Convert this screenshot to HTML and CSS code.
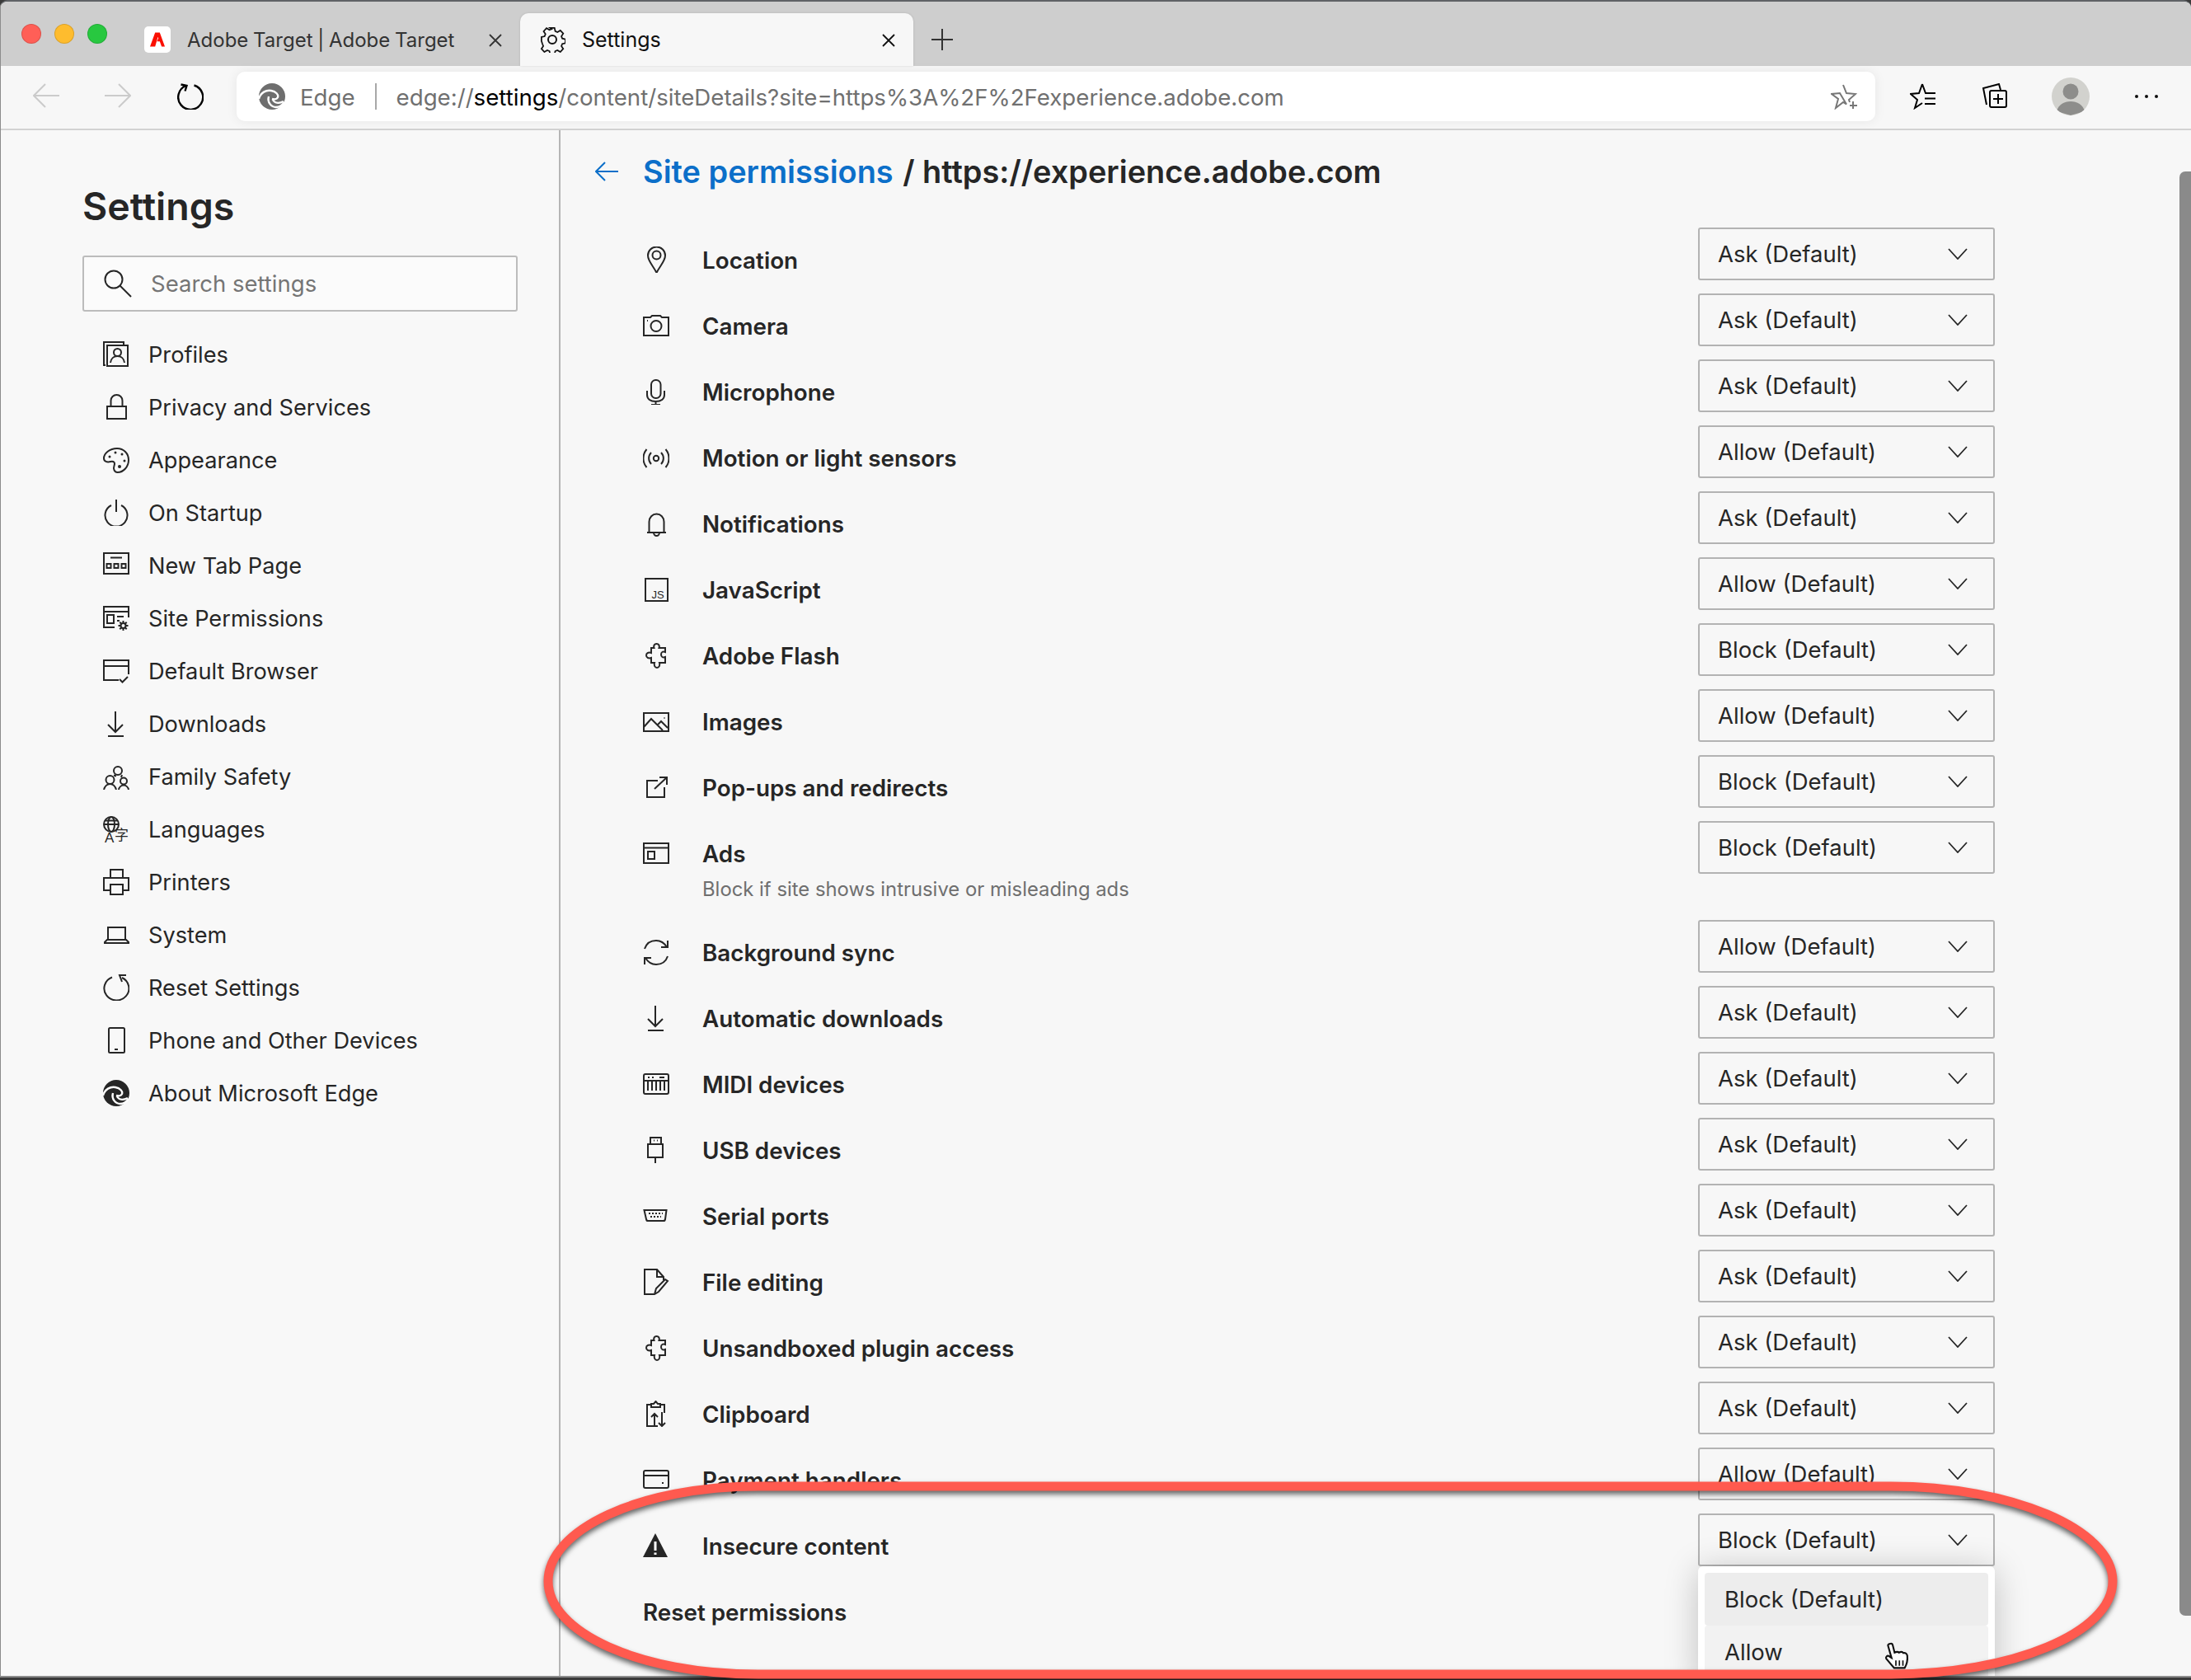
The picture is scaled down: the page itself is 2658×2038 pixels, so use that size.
FILE: index.html
```html
<!DOCTYPE html>
<html lang="en">
<head>
<meta charset="utf-8">
<title>Settings</title>
<link rel="stylesheet" href="styles.css">
</head>
<body>
<svg class="defs" width="0" height="0" aria-hidden="true">
  <symbol id="edge" viewBox="0 0 32 32">
    <circle class="solid" cx="16" cy="16" r="16"/>
    <path class="cut" d="M0 19C2 11 9 8 15 9c6 1 9 5 8 8-1 2-4 3-7 2"/>
    <path class="cut" d="M12 16c-2 7 3 13 9 13 4 0 7-2 10-6"/>
    <path class="cut" d="M17 20c2 4 7 5 13 2"/>
  </symbol>
  <symbol id="puzzle" viewBox="0 0 32 32"><path d="M10 7h3.500c-1-3 .5-5 3-5s4 2 3 5H27v5c-3-1-5 0-5 3s2 4 5 3v7h-7c1 3-.5 6-3 6s-4-3-3-6h-4v-6c-3 1-6 0-6-3s3-4 6-3z"/></symbol>
  <symbol id="download" viewBox="0 0 32 32"><path d="M15 1v25M6 17l9 9 9-9M6 31h19"/></symbol>
  <symbol id="profiles" viewBox="0 0 32 32"><path d="M3 29H1V1h24v3"/><rect x="5" y="5" width="25" height="25"/><circle cx="17.500" cy="13.500" r="4.500"/><path d="M9 26c.5-5 4-8 8.500-8s8 3 8.500 8"/></symbol>
  <symbol id="lock" viewBox="0 0 32 32"><rect x="5" y="15" width="23" height="15"/><path d="M9.500 15V8a7 7 0 0 1 14 0v7"/></symbol>
  <symbol id="palette" viewBox="0 0 32 32"><path d="M17 2C8 2 1 8 1 14c0 4 4 5 8 4 4-1 6 1 4.500 5-1.500 4 .5 8 4 8C25 31 31 24 31 16 31 8 25 2 17 2z"/><circle class="solid" cx="8" cy="12" r="1.500"/><circle class="solid" cx="15" cy="7" r="1.500"/><circle class="solid" cx="23" cy="9" r="1.500"/><circle class="solid" cx="26" cy="17" r="1.500"/><circle class="solid" cx="20" cy="24" r="2"/></symbol>
  <symbol id="power" viewBox="0 0 32 32"><path d="M16 0v15M10 7a13.500 13.500 0 1 0 12 0"/></symbol>
  <symbol id="newtab" viewBox="0 0 32 32"><rect x="1" y="1" width="30" height="25"/><path d="M9 6.500h14"/><rect x="4.500" y="14" width="5" height="5"/><rect x="13.500" y="14" width="5" height="5"/><rect x="22.500" y="14" width="5" height="5"/></symbol>
  <symbol id="siteperm" viewBox="0 0 32 32"><path d="M14 27H1V2h30v13M1 8h30"/><rect x="5" y="12" width="8" height="10"/><path d="M17 14h8M17 19h3"/><circle cx="24.500" cy="25" r="3"/><path d="M24.500 19v3M24.500 28v3M18.500 25h3M27.500 25h3M20.300 20.800l2 2M26.700 27.200l2 2M28.700 20.800l-2 2M22.300 27.200l-2 2"/></symbol>
  <symbol id="browser" viewBox="0 0 32 32"><path d="M19 27H1V3h30v17M1 10h30M20 26l3.500 3.500L30 23"/></symbol>
  <symbol id="family" viewBox="0 0 32 32"><circle cx="18" cy="9" r="5"/><circle cx="8.500" cy="20" r="5"/><circle cx="25" cy="21.500" r="4"/><path d="M1 32c1-4 4-7 7.500-7s6.500 3 7.500 7M19 32c.5-3 3-5.500 6-5.500s5.500 2.500 6 5.500M13 14.500l3 1M23 14l-1 3"/></symbol>
  <symbol id="printer" viewBox="0 0 32 32"><path d="M9 11V1h15v10M9 26H1V11h30v15h-7"/><rect x="9" y="19" width="15" height="12"/></symbol>
  <symbol id="laptop" viewBox="0 0 32 32"><path d="M6 22V7h21v15M5 22h23l3 3v1H2v-1z"/></symbol>
  <symbol id="reset" viewBox="0 0 32 32"><path d="M11 3.500a15 14.500 0 1 0 12 .5M28 1h-8l3 8"/></symbol>
  <symbol id="phone" viewBox="0 0 32 32"><rect x="7" y="1" width="19" height="30" rx="1.500"/><path d="M14 27h4"/></symbol>
  <symbol id="pin" viewBox="0 0 32 32"><path d="M16.500 32C13 24 6 18 6 11a10.500 10.500 0 0 1 21 0c0 7-7 13-10.500 21z"/><circle cx="16.500" cy="10.500" r="5"/></symbol>
  <symbol id="camera" viewBox="0 0 32 32"><path d="M1 6h8l2-2h10l2 2h8v22H1z"/><circle cx="16" cy="16.500" r="6.500"/><path d="M5 10h1"/></symbol>
  <symbol id="mic" viewBox="0 0 32 32"><rect x="10" y="2" width="11.500" height="22" rx="5.500"/><path d="M5 15v5c0 5 4 8 10.500 8s10.500-3 10.500-8v-5M15.500 28v3M10 32h11"/></symbol>
  <symbol id="sensor" viewBox="0 0 32 32"><circle cx="16" cy="17" r="3.200"/><path d="M10 10a10 10 0 0 0 0 14M22 10a10 10 0 0 1 0 14M4.500 6a17 17 0 0 0 0 22M27.500 6a17 17 0 0 1 0 22"/></symbol>
  <symbol id="bell" viewBox="0 0 32 32"><path d="M5 27h23M7.500 27V14a9 9.500 0 0 1 18 0v13M13 27c0 2 1.500 4 3.500 4s3.500-2 3.500-4"/></symbol>
  <symbol id="image" viewBox="0 0 32 32"><rect x="1" y="6" width="30" height="22"/><path d="M1 23l9-10 14 14M18 20l4-4 8 8M26 11.500v1"/></symbol>
  <symbol id="popup" viewBox="0 0 32 32"><path d="M18 8H5v20h21V16M14 18L29 4M20 4h9v9"/></symbol>
  <symbol id="ads" viewBox="0 0 32 32"><rect x="1" y="4" width="30" height="24"/><path d="M1 9.500h30"/><rect x="6" y="14" width="8" height="9"/></symbol>
  <symbol id="sync" viewBox="0 0 32 32"><path d="M2 12C4 6 9 2 16 2c6 0 10 3 13 8M30 2v8h-8M30 21c-2 6-7 10-14 10-6 0-10-3-13-8M2 31v-8h8"/></symbol>
  <symbol id="midi" viewBox="0 0 32 32"><rect x="1" y="4" width="30" height="24" rx="2"/><path d="M1 12h30M6 12v12M11 12v12M16 12v12M21 12v12M26 12v12M6 8h2M11 8h2M20 8h6"/></symbol>
  <symbol id="usb" viewBox="0 0 32 32"><path d="M9 9V1h13v8M6 9h18v16H6zM15 25v7M13 4.500h1M17 4.500h1"/></symbol>
  <symbol id="serial" viewBox="0 0 32 32"><path d="M1.500 9h27L27 20q-.3 2-2 2H6q-1.700 0-2-2z"/><path class="dash" d="M7 13h17M9 17h13"/></symbol>
  <symbol id="file" viewBox="0 0 32 32"><path d="M13 31H2V1h15l8 9v4M17 1v9h8M14 31l2-7 11-11 3 2-11 13z"/></symbol>
  <symbol id="clipboard" viewBox="0 0 32 32"><path d="M9 5H5v26h13M22 5h4v10M10 8V4h3l2.500-3L18 4h3v4zM14 31V16M10 20l4-4 4 4M23 14v17M19 27l4 4 4-4"/></symbol>
  <symbol id="payment" viewBox="0 0 32 32"><rect x="1" y="5" width="30" height="21" rx="2"/><path d="M1 11h30M23 20h2"/></symbol>
  <symbol id="warning" viewBox="0 0 32 32"><path class="solid" d="M15 1l15 29H0z"/><path class="cut thin" d="M15 11v11M15 24.500v2.500"/></symbol>
</svg>

<div class="window">
  <header class="tabstrip">
    <div class="lights"><span class="light red"></span><span class="light amber"></span><span class="light green"></span></div>
    <div class="tab">
      <span class="favicon"><svg viewBox="0 0 32 32" width="20" height="18"><path class="adobe" d="M11 1h10l11 30h-7l-4-11h-6l3-7 2 5-3-8-6 21H0z"/></svg></span>
      <span class="tab-title tight">Adobe Target | Adobe Target</span>
      <svg class="close" viewBox="0 0 16 16"><path d="M1 1l14 14M15 1L1 15"/></svg>
    </div>
    <div class="tab active">
      <svg class="gear" viewBox="0 0 32 32"><path d="M13 1h6l1 4.500 3 1.300 4-2.400 4 4.300-2.500 3.800 1.200 3 4.300 1v5.500l-4.300 1-1.200 3 2.500 3.800-4 4.300-4-2.400-3 1.300-1 4.500h-6l-1-4.500-3-1.300-4 2.400-4-4.300 2.500-3.800-1.200-3L1 19v-5.500l4.300-1 1.200-3L4 5.700 8 1.400l4 2.400 3-1.300z" transform="translate(2 1) scale(.88)"/><circle cx="16" cy="16" r="5"/></svg>
      <span class="tab-title">Settings</span>
      <svg class="close" viewBox="0 0 16 16"><path d="M1 1l14 14M15 1L1 15"/></svg>
    </div>
    <svg class="plus" viewBox="0 0 26 26"><path d="M13 0v26M0 13h26"/></svg>
  </header>

  <nav class="toolbar">
    <svg class="tool muted back" viewBox="0 0 32 32"><path d="M32 15H1M15 1L1 15l14 14"/></svg>
    <svg class="tool muted forward" viewBox="0 0 32 32"><path d="M0 15h31M17 1l14 14-14 14"/></svg>
    <svg class="tool reload" viewBox="0 0 32 32"><path d="M10 2.500a15 15 0 1 0 10-.5M4 1l7 1.500-2 6.500" transform="translate(.5 .5)"/></svg>
    <div class="address">
      <svg class="ico edge-gray"><use href="#edge"/></svg>
      <span class="edge-label">Edge</span>
      <span class="addr-sep"></span>
      <span class="url">edge://<b>settings</b>/content/siteDetails?site=https%3A%2F%2Fexperience.adobe.com</span>
      <svg class="tool star" viewBox="0 0 32 32"><path d="M15 2l4 10 11 1-8 7 1 3M19 25.500L15 23l-9 7 3-11-8-6 10-1z"/><path d="M27 22v9M23 27h9"/></svg>
    </div>
    <svg class="tool favs" viewBox="0 0 32 32"><path d="M15 1l-4 11-10 1 8 7-3 10 9-6M15 1l4 11h12M18 18.500h13M18 25h13"/></svg>
    <svg class="tool colls" viewBox="0 0 32 32"><path d="M5 26L1 6 20 1l2 7"/><rect x="9" y="9" width="20" height="20" rx="2"/><path d="M19 13v12M13 19h12"/></svg>
    <span class="avatar"><svg viewBox="0 0 46 46"><circle class="fig" cx="23" cy="17" r="9.500"/><path class="fig" d="M6 41c2-8 9-12 17-12s15 4 17 12l-17 5z"/></svg></span>
    <span class="dots"><i></i><i></i><i></i></span>
  </nav>

  <div class="main">
    <aside class="sidebar">
      <h1 class="side-title">Settings</h1>
      <div class="search">
        <svg class="ico" viewBox="0 0 32 32"><circle cx="11" cy="11" r="10.500"/><path d="M18.500 18.500L32 32"/></svg>
        <span class="search-text">Search settings</span>
      </div>
      <ul class="side-nav">
        <li><svg class="ico"><use href="#profiles"/></svg>Profiles</li>
        <li><svg class="ico"><use href="#lock"/></svg>Privacy and Services</li>
        <li><svg class="ico"><use href="#palette"/></svg>Appearance</li>
        <li><svg class="ico"><use href="#power"/></svg>On Startup</li>
        <li><svg class="ico"><use href="#newtab"/></svg>New Tab Page</li>
        <li><svg class="ico"><use href="#siteperm"/></svg>Site Permissions</li>
        <li><svg class="ico"><use href="#browser"/></svg>Default Browser</li>
        <li><svg class="ico"><use href="#download"/></svg>Downloads</li>
        <li><svg class="ico"><use href="#family"/></svg>Family Safety</li>
        <li><svg class="ico" viewBox="0 0 32 32"><circle cx="10" cy="10" r="9"/><ellipse cx="10" cy="10" rx="4" ry="9"/><path d="M1 10h18M2.500 5.500h15"/><text class="glyph" x="2" y="32" font-size="17">A</text><text class="glyph cjk" x="14" y="29" font-size="17">字</text></svg>Languages</li>
        <li><svg class="ico"><use href="#printer"/></svg>Printers</li>
        <li><svg class="ico"><use href="#laptop"/></svg>System</li>
        <li><svg class="ico"><use href="#reset"/></svg>Reset Settings</li>
        <li><svg class="ico"><use href="#phone"/></svg>Phone and Other Devices</li>
        <li><svg class="ico about"><use href="#edge"/></svg>About Microsoft Edge</li>
      </ul>
    </aside>

    <section class="content">
      <div class="crumbs">
        <svg class="crumb-back" viewBox="0 0 28 24"><path d="M28 12H1M12 1L1 12l11 11"/></svg>
        <h2 class="crumb-title"><a class="crumb-link">Site permissions</a> / https://experience.adobe.com</h2>
      </div>

      <div class="row"><svg class="ico"><use href="#pin"/></svg><div class="text"><div class="label">Location</div></div><div class="select">Ask (Default)<svg class="chev" viewBox="0 0 24 14"><path d="M1 1l11 12L23 1"/></svg></div></div>
      <div class="row"><svg class="ico"><use href="#camera"/></svg><div class="text"><div class="label">Camera</div></div><div class="select">Ask (Default)<svg class="chev" viewBox="0 0 24 14"><path d="M1 1l11 12L23 1"/></svg></div></div>
      <div class="row"><svg class="ico"><use href="#mic"/></svg><div class="text"><div class="label">Microphone</div></div><div class="select">Ask (Default)<svg class="chev" viewBox="0 0 24 14"><path d="M1 1l11 12L23 1"/></svg></div></div>
      <div class="row"><svg class="ico"><use href="#sensor"/></svg><div class="text"><div class="label">Motion or light sensors</div></div><div class="select">Allow (Default)<svg class="chev" viewBox="0 0 24 14"><path d="M1 1l11 12L23 1"/></svg></div></div>
      <div class="row"><svg class="ico"><use href="#bell"/></svg><div class="text"><div class="label">Notifications</div></div><div class="select">Ask (Default)<svg class="chev" viewBox="0 0 24 14"><path d="M1 1l11 12L23 1"/></svg></div></div>
      <div class="row"><svg class="ico" viewBox="0 0 32 32"><rect x="3" y="3" width="27" height="27"/><text class="glyph" x="10.500" y="26.500" font-size="13">JS</text></svg><div class="text"><div class="label">JavaScript</div></div><div class="select">Allow (Default)<svg class="chev" viewBox="0 0 24 14"><path d="M1 1l11 12L23 1"/></svg></div></div>
      <div class="row"><svg class="ico"><use href="#puzzle"/></svg><div class="text"><div class="label">Adobe Flash</div></div><div class="select">Block (Default)<svg class="chev" viewBox="0 0 24 14"><path d="M1 1l11 12L23 1"/></svg></div></div>
      <div class="row"><svg class="ico"><use href="#image"/></svg><div class="text"><div class="label">Images</div></div><div class="select">Allow (Default)<svg class="chev" viewBox="0 0 24 14"><path d="M1 1l11 12L23 1"/></svg></div></div>
      <div class="row"><svg class="ico"><use href="#popup"/></svg><div class="text"><div class="label">Pop-ups and redirects</div></div><div class="select">Block (Default)<svg class="chev" viewBox="0 0 24 14"><path d="M1 1l11 12L23 1"/></svg></div></div>
      <div class="row row-tall"><svg class="ico"><use href="#ads"/></svg><div class="text"><div class="label">Ads</div><div class="sub">Block if site shows intrusive or misleading ads</div></div><div class="select">Block (Default)<svg class="chev" viewBox="0 0 24 14"><path d="M1 1l11 12L23 1"/></svg></div></div>
      <div class="row"><svg class="ico"><use href="#sync"/></svg><div class="text"><div class="label">Background sync</div></div><div class="select">Allow (Default)<svg class="chev" viewBox="0 0 24 14"><path d="M1 1l11 12L23 1"/></svg></div></div>
      <div class="row"><svg class="ico"><use href="#download"/></svg><div class="text"><div class="label">Automatic downloads</div></div><div class="select">Ask (Default)<svg class="chev" viewBox="0 0 24 14"><path d="M1 1l11 12L23 1"/></svg></div></div>
      <div class="row"><svg class="ico"><use href="#midi"/></svg><div class="text"><div class="label">MIDI devices</div></div><div class="select">Ask (Default)<svg class="chev" viewBox="0 0 24 14"><path d="M1 1l11 12L23 1"/></svg></div></div>
      <div class="row"><svg class="ico"><use href="#usb"/></svg><div class="text"><div class="label">USB devices</div></div><div class="select">Ask (Default)<svg class="chev" viewBox="0 0 24 14"><path d="M1 1l11 12L23 1"/></svg></div></div>
      <div class="row"><svg class="ico"><use href="#serial"/></svg><div class="text"><div class="label">Serial ports</div></div><div class="select">Ask (Default)<svg class="chev" viewBox="0 0 24 14"><path d="M1 1l11 12L23 1"/></svg></div></div>
      <div class="row"><svg class="ico"><use href="#file"/></svg><div class="text"><div class="label">File editing</div></div><div class="select">Ask (Default)<svg class="chev" viewBox="0 0 24 14"><path d="M1 1l11 12L23 1"/></svg></div></div>
      <div class="row"><svg class="ico"><use href="#puzzle"/></svg><div class="text"><div class="label">Unsandboxed plugin access</div></div><div class="select">Ask (Default)<svg class="chev" viewBox="0 0 24 14"><path d="M1 1l11 12L23 1"/></svg></div></div>
      <div class="row"><svg class="ico"><use href="#clipboard"/></svg><div class="text"><div class="label">Clipboard</div></div><div class="select">Ask (Default)<svg class="chev" viewBox="0 0 24 14"><path d="M1 1l11 12L23 1"/></svg></div></div>
      <div class="row"><svg class="ico"><use href="#payment"/></svg><div class="text"><div class="label">Payment handlers</div></div><div class="select">Allow (Default)<svg class="chev" viewBox="0 0 24 14"><path d="M1 1l11 12L23 1"/></svg></div></div>
      <div class="row"><svg class="ico"><use href="#warning"/></svg><div class="text"><div class="label">Insecure content</div></div>
        <div class="select">Block (Default)<svg class="chev" viewBox="0 0 24 14"><path d="M1 1l11 12L23 1"/></svg>
          <div class="menu">
            <div class="option current">Block (Default)</div>
            <div class="option hover">Allow
              <svg class="hand" viewBox="0 0 30 32"><path d="M8 2c2-1 3 0 3.500 2l2 8c2-1 4-1 5 0 2-1 4-1 5 .5 2-.5 4 .5 4.500 3 .5 5-.5 10-3 14H13L4 19c-1-2 1-4 3-3l3 2-4-14c-.3-1 .5-1.700 2-2z"/><path class="hand-line" d="M15 21v6M19 21v6M23 21v6"/></svg>
            </div>
          </div>
        </div>
      </div>
      <div class="row row-plain"><div class="text"><div class="label">Reset permissions</div></div></div>

      <div class="scrollbar"></div>
    </section>
  </div>
</div>

<svg class="callout" viewBox="0 0 2658 2038" aria-hidden="true">
  <path d="M920 1803H2294C2440 1803 2563 1855 2563 1918S2440 2031 2294 2031H920C775 2031 665 1980 665 1918S775 1803 920 1803Z"/>
</svg>
</body>
</html>
```

FILE: styles.css
```css
* { box-sizing: border-box; }
html, body { margin: 0; height: 2038px; overflow: hidden; }
body { position: relative; background: #3a3a3a; font-family: Inter, "Noto Sans", sans-serif; color: #262626; }
.defs { position: absolute; }
.solid { fill: currentColor; stroke: none; }
.cut { fill: none; stroke: #fff; stroke-width: 2.400; }
.cut.thin { stroke-width: 3; }
.glyph { fill: currentColor; stroke: none; font-family: "Liberation Sans", sans-serif; }
.cjk { font-family: "Noto Sans CJK SC", sans-serif; }
.dash { stroke-dasharray: 2 2; }

.window { height: 2035px; display: flex; flex-direction: column; overflow: hidden; background: #f7f7f7; border-top: 2px solid #5f6266; border-bottom: 2px solid #8c8c8c; border-left: 1px solid #8c8c8c; border-radius: 9px 9px 0 0; }

.tabstrip { flex: none; height: 78px; display: flex; align-items: flex-end; background: #cecece; }
.lights { align-self: flex-start; display: flex; gap: 16px; margin: 27px 0 0 25px; }
.light { width: 24px; height: 24px; border-radius: 50%; border: 1px solid rgba(0,0,0,.14); }
.red { background: #ff5f57; }
.amber { background: #febc2e; }
.green { background: #28c840; }
.tab { width: 477px; height: 64px; display: flex; align-items: center; position: relative; color: #333; font-size: 25px; border-radius: 10px 10px 0 0; }
.lights + .tab { margin-left: 45px; width: 456px; }
.favicon { flex: none; width: 32px; height: 32px; background: #fff; border-radius: 5px; display: flex; align-items: center; justify-content: center; }
.adobe { fill: #fa0f00; stroke: none; }
.tab-title { margin-left: 20px; white-space: nowrap; }
.tight { font-size: 24px; word-spacing: -1px; }
.close { width: 16px; height: 16px; position: absolute; right: 22px; top: 25px; fill: none; stroke: currentColor; stroke-width: 1.800; }
.tab.active { background: #f7f7f7; color: #111; padding-left: 23px; box-shadow: 0 0 3px rgba(0,0,0,.12); }
.gear { width: 32px; height: 32px; flex: none; fill: none; stroke: #111; stroke-width: 2; }
.plus { flex: none; width: 26px; height: 26px; margin: 0 0 19px 22px; stroke: #333; stroke-width: 2; fill: none; }

.toolbar { flex: none; height: 78px; display: flex; align-items: center; padding: 0 0 2px 39px; background: #f7f7f7; border-bottom: 2px solid #d2d2d2; }
.tool { flex: none; width: 32px; height: 32px; fill: none; stroke: #000; stroke-width: 2; }
.tool.muted { stroke: #cbcbcb; }
.forward { margin-left: 55px; }
.reload { margin-left: 56px; stroke-width: 2.400; }
.address { flex: none; width: 1988px; height: 60px; margin-left: 40px; display: flex; align-items: center; padding: 0 22px 0 27px; background: #fff; border-radius: 10px; box-shadow: 0 0 14px rgba(0,0,0,.07); color: #707070; font-size: 27.650px; white-space: nowrap; }
.edge-gray { color: #6e6e6e; }
.edge-gray, .about { stroke: none; }
.edge-label { margin-left: 18px; padding-top: 2px; }
.addr-sep { width: 2px; height: 32px; background: #a8a8a8; margin: 0 24px 0 24px; }
.url { padding-top: 2px; }
.url b { font-weight: 400; color: #000; }
.star { margin-left: auto; stroke: #777; }
.favs { margin-left: 42px; }
.colls { margin-left: 56px; }
.avatar { flex: none; width: 46px; height: 46px; margin-left: 52px; border-radius: 50%; background: #d2d2ce; overflow: hidden; }
.avatar svg { display: block; }
.fig { fill: #8d8d8b; }
.dots { flex: none; display: flex; gap: 8px; margin-left: 55px; }
.dots i { width: 4px; height: 4px; background: #111; border-radius: 50%; }

.main { flex: 1; display: flex; min-height: 0; }
.sidebar { flex: none; width: 679px; padding: 62px 50px 0 99px; border-right: 2px solid #b5b5b5; background: #f8f8f8; }
.side-title { margin: 0; height: 60px; line-height: 60px; font-size: 46.500px; font-weight: 600; color: #262626; }
.search { height: 68px; margin-top: 30px; display: flex; align-items: center; gap: 24px; padding-left: 25px; background: #fbfbfb; border: 2px solid #bcbcbc; border-radius: 3px; }
.search-text { font-size: 27.500px; color: #757575; }
.ico { flex: none; width: 32px; height: 32px; fill: none; stroke: currentColor; stroke-width: 2; overflow: visible; }
.side-nav { list-style: none; margin: 20px 0 0; padding: 0 0 0 25px; }
.side-nav li { height: 64px; display: flex; align-items: center; gap: 23px; font-size: 27.200px; white-space: nowrap; }

.content { flex: 1; position: relative; padding: 26px 238px 0 0; overflow: hidden; }
.crumbs { display: flex; align-items: center; gap: 30px; height: 48px; margin: 0 0 44px 42px; }
.crumb-back { width: 28px; height: 24px; flex: none; fill: none; stroke: #0c6fc9; stroke-width: 2; }
.crumb-title { margin: 0; font-size: 37.900px; line-height: 48px; font-weight: 600; white-space: nowrap; }
.crumb-link { color: #0c6fc9; margin-right: 2px; }

.row { height: 80px; display: flex; align-items: flex-start; padding-left: 100px; }
.row-tall { height: 120px; }
.row > .ico { margin: 23px 40px 0 0; }
.text { flex: 1; }
.label { margin-top: 20px; font-size: 27.800px; line-height: 40px; font-weight: 600; white-space: nowrap; }
.sub { font-size: 23.850px; line-height: 36px; margin-top: 5px; color: #6f6f6f; white-space: nowrap; }
.select { flex: none; width: 360px; height: 64px; position: relative; display: flex; align-items: center; justify-content: space-between; padding: 0 31px 0 22px; border: 2px solid #b3b3b3; border-radius: 3px; font-size: 27.500px; white-space: nowrap; }
.chev { width: 24px; height: 14px; fill: none; stroke: #262626; stroke-width: 1.800; }
.menu { position: absolute; left: -2px; right: -2px; top: 62px; padding: 8px; background: #fff; border-radius: 6px; box-shadow: 0 4px 40px rgba(0,0,0,.22); }
.option { height: 64px; display: flex; align-items: center; padding-left: 24px; border-radius: 4px; position: relative; }
.option.current { background: #ededed; }
.option.hover { background: #f2f2f2; }
.hand { position: absolute; left: 216px; top: 20px; width: 32px; height: 34px; fill: #fff; stroke: #111; stroke-width: 2; }
.hand-line { stroke-width: 1.600; }
.scrollbar { position: absolute; right: 0; top: 50px; width: 14px; height: 1752px; background: #8a8a8a; border-radius: 7px 0 0 7px; }

.callout { position: absolute; left: 0; top: 0; width: 2658px; height: 2038px; fill: none; stroke: #ff5a4f; stroke-width: 11; filter: drop-shadow(0 4px 3px rgba(0,0,0,.6)); pointer-events: none; }
```
